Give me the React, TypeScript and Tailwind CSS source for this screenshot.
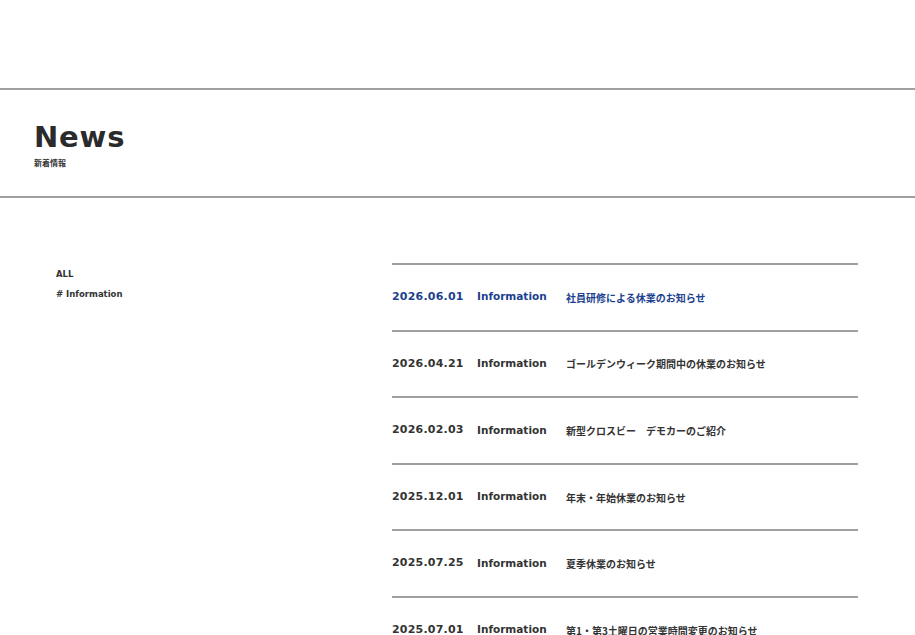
const items = [
  { date: "2026.06.01", title: "社員研修による休業のお知らせ", active: true },
  { date: "2026.04.21", title: "ゴールデンウィーク期間中の休業のお知らせ" },
  { date: "2026.02.03", title: "新型クロスビー　デモカーのご紹介" },
  { date: "2025.12.01", title: "年末・年始休業のお知らせ" },
  { date: "2025.07.25", title: "夏季休業のお知らせ" },
  { date: "2025.07.01", title: "第1・第3土曜日の営業時間変更のお知らせ" },
];

const wide = { fontFamily: '"DejaVu Sans", "Noto Sans CJK JP", sans-serif' };
const jp = { fontFamily: '"Noto Sans CJK JP", sans-serif' };

export default function App() {
  return (
    <div className="min-h-screen bg-white text-[#333]" style={wide}>
      <header className="h-[88px]" />
      <section className="border-y-2 border-[#a0a0a0] h-[110px] flex flex-col justify-center pl-[34px]">
        <h1 className="text-[29px] leading-none font-bold tracking-[0.8px] text-[#2b2b2b] mt-[5px]">News</h1>
        <p className="text-[8px] font-bold mt-[5px] text-[#333]" style={jp}>新着情報</p>
      </section>
      <main className="flex pt-[65px]">
        <nav className="w-[392px] pl-[56px] pt-[6px] flex flex-col gap-[10px] text-[8.5px] font-bold">
          <a className="leading-[10px]">ALL</a>
          <a className="leading-[10px]"># Information</a>
        </nav>
        <ul className="w-[466px] border-t-2 border-[#a0a0a0]">
          {items.map((it) => (
            <li
              key={it.date}
              className={`h-[66.6px] border-b-2 border-[#a0a0a0] flex items-center font-bold ${
                it.active ? "text-[#1c3f8f]" : "text-[#333]"
              }`}
            >
              <span className="w-[85px] text-[11px] tracking-[0.2px]">{it.date}</span>
              <span className="w-[89px] text-[10.5px]">Information</span>
              <span className="text-[10px] font-bold" style={jp}>{it.title}</span>
            </li>
          ))}
        </ul>
      </main>
    </div>
  );
}
